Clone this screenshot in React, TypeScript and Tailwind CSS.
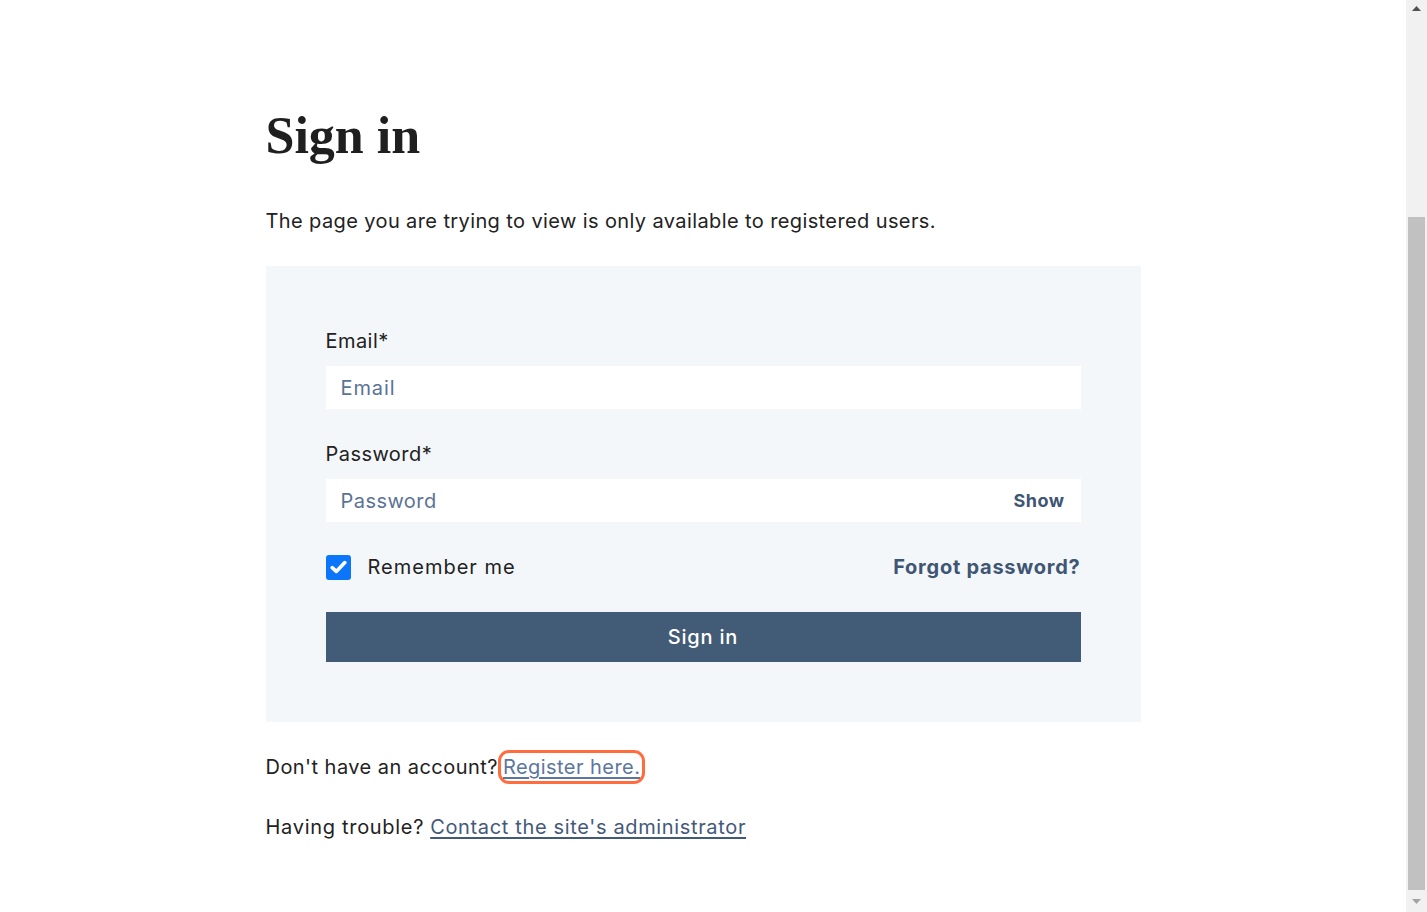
import React from "react";

const sans = { fontFamily: "Inter, 'Open Sans', sans-serif" } as const;

export default function App() {
  return (
    <div className="flex h-screen w-full overflow-hidden bg-white tracking-[0.45px]" style={sans}>
      <main className="flex-1 min-w-0">
        <div className="mx-auto w-[875px] pt-[106px] text-[#222]">
          <h1
            className="text-[52px] leading-[60px] font-bold tracking-normal text-[#1f1f1f]"
            style={{ fontFamily: "'Liberation Serif', serif" }}
          >
            Sign in
          </h1>
          <p className="mt-[40px] text-[20px] leading-[30px] tracking-[0.39px] text-[#222]">
            The page you are trying to view is only available to registered users.
          </p>

          <div className="mt-[30px] bg-[#f4f7fa] px-[60px] py-[60px]">
            <label className="block text-[20px] leading-[30px] text-[#222]">Email*</label>
            <div className="mt-[10px] flex h-[43px] items-center bg-white px-[15px]">
              <span className="text-[20px] tracking-[0.9px] text-[#5a7396]">Email</span>
            </div>

            <label className="mt-[30px] block text-[20px] leading-[30px] text-[#222]">Password*</label>
            <div className="mt-[10px] flex h-[43px] items-center justify-between bg-white pl-[15px] pr-[16px]">
              <span className="text-[20px] text-[#5a7396]">Password</span>
              <span className="text-[18px] font-bold tracking-[0.5px] text-[#3e5674]">Show</span>
            </div>

            <div className="mt-[30px] flex h-[30px] items-center justify-between">
              <div className="flex items-center gap-[17px]">
                <span className="flex h-[25px] w-[25px] items-center justify-center rounded-[3px] bg-[#0b76f9]">
                  <svg width="17" height="14" viewBox="0 0 17 14" fill="none">
                    <path
                      d="M2.2 7.6 L6.3 11.4 L14.8 2.6"
                      stroke="white"
                      strokeWidth="3.6"
                      strokeLinecap="round"
                      strokeLinejoin="round"
                    />
                  </svg>
                </span>
                <span className="text-[20px] tracking-[1px] text-[#222]">Remember me</span>
              </div>
              <span className="text-[20px] font-bold tracking-[0.75px] text-[#3e5674]">Forgot password?</span>
            </div>

            <div className="mt-[30px] flex h-[50px] items-center justify-center bg-[#425b76]">
              <span className="text-[20px] font-medium tracking-[0.8px] text-white">Sign in</span>
            </div>
          </div>

          <p className="mt-[30px] text-[20px] leading-[30px] text-[#222]">
            Don't have an account?
            <a
              href="#"
              className="ml-[5px] rounded-[6px] text-[#5c76a0] underline underline-offset-[3px] outline outline-[3px] outline-offset-[2px] outline-[#ff6d3f]"
            >
              Register here.
            </a>
          </p>
          <p className="mt-[30px] text-[20px] leading-[30px] text-[#222]">
            <span className="tracking-[0.7px]">Having trouble?</span>{" "}
            <a href="#" className="tracking-[0.65px] text-[#43597a] underline underline-offset-[3px]">
              Contact the site's administrator
            </a>
          </p>
        </div>
      </main>

      <div className="flex w-[21px] shrink-0 flex-col bg-[#f1f1f1]">
        <div className="flex h-[17px] items-center justify-center">
          <svg width="9" height="5" viewBox="0 0 9 5">
            <path d="M0 5 L4.5 0 L9 5 Z" fill="#505050" />
          </svg>
        </div>
        <div className="h-[200px]" />
        <div className="mx-auto w-[17px] h-[673px] bg-[#c1c1c1]" />
        <div className="flex flex-1 items-center justify-center">
          <svg width="9" height="5" viewBox="0 0 9 5">
            <path d="M0 0 L9 0 L4.5 5 Z" fill="#a3a3a3" />
          </svg>
        </div>
      </div>
    </div>
  );
}
